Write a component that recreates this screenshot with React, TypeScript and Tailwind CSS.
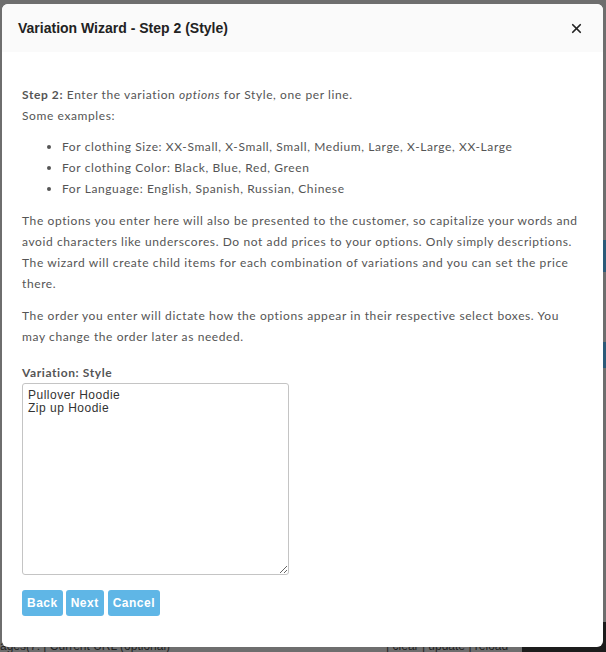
import { X } from "lucide-react";

const examples = [
  "For clothing Size: XX-Small, X-Small, Small, Medium, Large, X-Large, XX-Large",
  "For clothing Color: Black, Blue, Red, Green",
  "For Language: English, Spanish, Russian, Chinese",
];

function WizardButton({ label }: { label: string }) {
  return (
    <button
      type="button"
      className="h-[26px] rounded-[3px] bg-[#5fb6e6] px-[5px] font-['Liberation_Sans',Arial,sans-serif] text-[12px] font-bold tracking-[0.5px] text-white"
    >
      {label}
    </button>
  );
}

export default function App() {
  return (
    <div className="relative h-[652px] w-[606px] overflow-hidden bg-[#6e6e6e]">
      {/* page behind the overlay */}
      <div className="absolute bottom-0 left-0 flex h-[6px] w-full items-end text-[12px] leading-[12px] text-[#222] font-['Liberation_Sans',Arial,sans-serif]">
        <span className="whitespace-nowrap">ages(7: | Current URL (optional)</span>
        <span className="ml-[216px] whitespace-nowrap">| clear | update | reload</span>
        <div className="ml-auto h-[30px] w-[84px] bg-[#1c1c1c]" />
      </div>
      <div className="absolute right-0 top-[240px] h-[32px] w-[4px] bg-[#2c5a78]" />
      <div className="absolute right-0 top-[342px] h-[26px] w-[4px] bg-[#2c5a78]" />

      <div className="absolute left-[2px] top-[4px] h-[643px] w-[601px] overflow-hidden rounded-[6px] bg-white">
        <div className="flex h-[48px] items-center justify-between bg-[#fafafa] pl-[16px] pr-[19px]">
          <h2 className="font-['Liberation_Sans',Arial,sans-serif] text-[14px] font-bold text-[#222]">
            Variation Wizard - Step 2 (Style)
          </h2>
          <X size={15} strokeWidth={2.75} className="text-[#222]" />
        </div>

        <div className="px-[20px] pt-[32px] font-['Lato',sans-serif] text-[12px] leading-[21px] tracking-[0.6px] text-[#555]">
          <p>
            <b className="font-bold">Step 2:</b> Enter the variation <i>options</i> for Style, one per line.
          </p>
          <p>Some examples:</p>
          <ul className="mt-[10px] list-disc pl-[40px]">
            {examples.map((item) => (
              <li key={item}>{item}</li>
            ))}
          </ul>
          <p className="mt-[11px]">
            The options you enter here will also be presented to the customer, so capitalize your words and
            avoid characters like underscores. Do not add prices to your options. Only simply descriptions.
            The wizard will create child items for each combination of variations and you can set the price
            there.
          </p>
          <p className="mt-[11px]">
            The order you enter will dictate how the options appear in their respective select boxes. You
            may change the order later as needed.
          </p>

          <label className="mt-[15px] block font-bold leading-[21px]">Variation: Style</label>
          <textarea
            defaultValue={"Pullover Hoodie\nZip up Hoodie"}
            className="block h-[192px] w-[267px] rounded-[3px] border border-[#c4c4c4] px-[5px] py-[5px] font-['Liberation_Sans',Arial,sans-serif] text-[12px] leading-[13px] tracking-[0.5px] text-[#333] outline-none"
          />

          <div className="mt-[15px] flex gap-[3px]">
            <WizardButton label="Back" />
            <WizardButton label="Next" />
            <div className="ml-[1px]">
              <WizardButton label="Cancel" />
            </div>
          </div>
        </div>
      </div>
    </div>
  );
}
